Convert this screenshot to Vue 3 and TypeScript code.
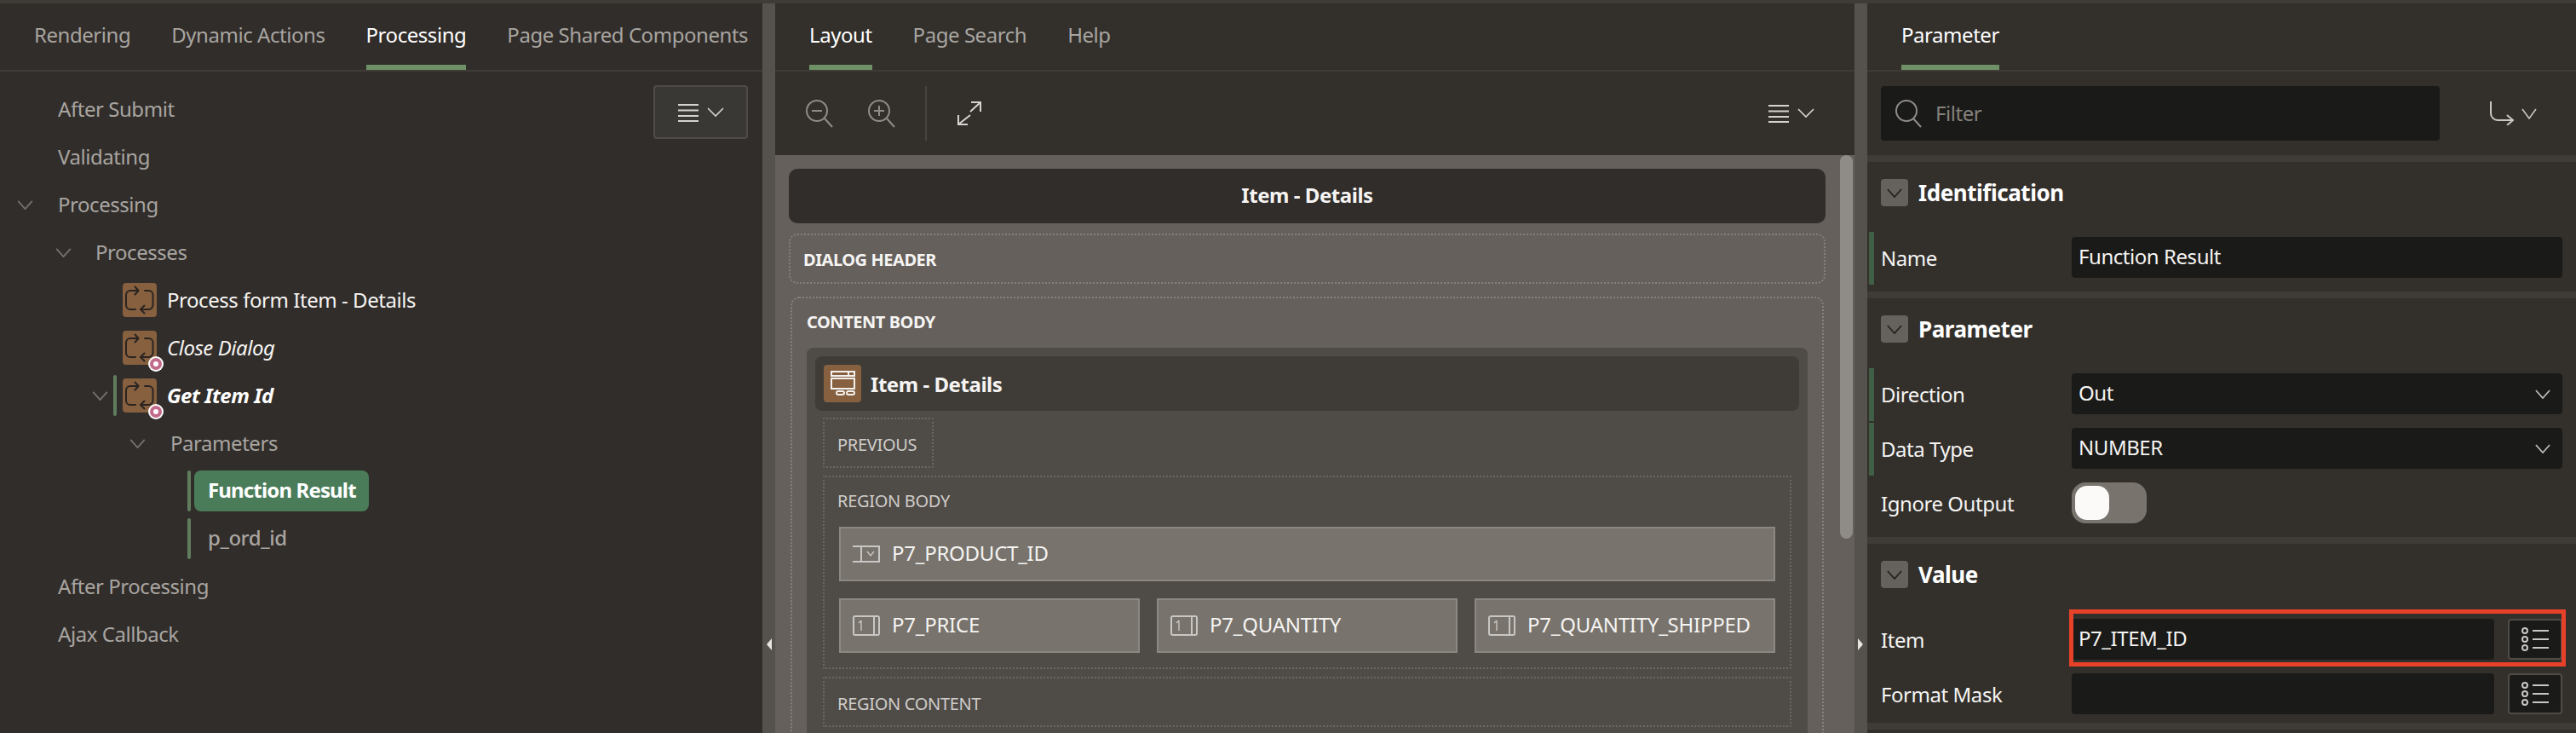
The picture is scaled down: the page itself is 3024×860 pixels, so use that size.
<script setup lang="ts">
interface TreeRow {
  label: string
  indent: number
  chevron?: boolean
  kind?: 'process' | 'param'
  italic?: boolean
  bold?: boolean
  badge?: boolean
  marker?: boolean
  selected?: boolean
}

const leftTabs = ['Rendering', 'Dynamic Actions', 'Processing', 'Page Shared Components']
const centerTabs = ['Layout', 'Page Search', 'Help']

const tree: TreeRow[] = [
  { label: 'After Submit', indent: 0 },
  { label: 'Validating', indent: 0 },
  { label: 'Processing', indent: 0, chevron: true },
  { label: 'Processes', indent: 1, chevron: true },
  { label: 'Process form Item - Details', indent: 2, kind: 'process' },
  { label: 'Close Dialog', indent: 2, kind: 'process', italic: true, badge: true },
  { label: 'Get Item Id', indent: 2, kind: 'process', italic: true, bold: true, badge: true, chevron: true, marker: true },
  { label: 'Parameters', indent: 3, chevron: true },
  { label: 'Function Result', indent: 4, kind: 'param', selected: true, marker: true },
  { label: 'p_ord_id', indent: 4, kind: 'param', marker: true },
  { label: 'After Processing', indent: 0 },
  { label: 'Ajax Callback', indent: 0 },
]

const numberItems = ['P7_PRICE', 'P7_QUANTITY', 'P7_QUANTITY_SHIPPED']
</script>

<template>
  <div class="app">
    <svg class="sprite" aria-hidden="true">
      <symbol id="chev" viewBox="0 0 20 12">
        <path d="M1 1l9 10 9-10" fill="none" stroke="currentColor" stroke-width="2" />
      </symbol>
      <symbol id="menu" viewBox="0 0 54 22">
        <path d="M0 2h24M0 8.500h24M0 15h24M0 21h24" fill="none" stroke="currentColor" stroke-width="2" />
        <path d="M35 6l9 9 9-9" fill="none" stroke="currentColor" stroke-width="1.6" />
      </symbol>
      <symbol id="loop" viewBox="0 0 40 40">
        <g fill="none" stroke="#2a2421" stroke-width="2" stroke-linecap="round" stroke-linejoin="round">
          <path d="M18 9H9a5 5 0 0 0-5 5v12a5 5 0 0 0 5 5h6" />
          <path d="M14.500 4.500l4 4.500-4 4.500" />
          <path d="M26 9h4.500a5 5 0 0 1 5 5v12a5 5 0 0 1-5 5H21" />
          <path d="M25.500 26.500l-4.500 4.500 4.500 4.500" />
        </g>
      </symbol>
      <symbol id="list" viewBox="0 0 32 28">
        <g fill="none" stroke="#c9c7c4" stroke-width="2">
          <circle cx="4" cy="4" r="3" />
          <circle cx="4" cy="14" r="3" />
          <circle cx="4" cy="24" r="3" />
          <path d="M13 4h19M13 14h19M13 24h19" />
        </g>
      </symbol>
      <symbol id="num" viewBox="0 0 32 24">
        <g fill="none" stroke="#c9c7c4">
          <rect x="1" y="1" width="30" height="22" rx="2" stroke-width="2" />
          <path d="M10 6l-3 3M10 6v12" stroke-width="1.4" />
          <path d="M25 2v20" stroke-width="2" />
        </g>
      </symbol>
    </svg>

    <div class="top-strip"></div>
    <div class="workspace">
      <!-- page tree -->
      <section class="panel panel--left">
        <nav class="tabs tabs--left">
          <span v-for="t in leftTabs" :key="t" class="tab" :class="{ 'tab--on': t === 'Processing' }">{{ t }}</span>
        </nav>
        <div class="tree-wrap">
          <ul class="tree">
            <li v-for="row in tree" :key="row.label" class="row" :class="'row--i' + row.indent">
              <svg v-if="row.chevron" class="row__chev"><use href="#chev" /></svg>
              <span v-if="row.marker" class="row__marker"></span>
              <span v-if="row.kind === 'process'" class="proc">
                <svg class="proc__icon"><use href="#loop" /></svg>
                <span v-if="row.badge" class="proc__badge"></span>
              </span>
              <span
                class="row__label"
                :class="{
                  'row__label--proc': row.kind === 'process',
                  'row__label--i': row.italic,
                  'row__label--b': row.bold,
                  'row__label--param': row.kind === 'param',
                  'row__label--sel': row.selected,
                }"
              >{{ row.label }}</span>
            </li>
          </ul>
          <button class="menu-btn"><svg class="menu-ic"><use href="#menu" /></svg></button>
        </div>
      </section>

      <div class="split"><span class="split__arrow split__arrow--l"></span></div>

      <!-- layout -->
      <section class="panel panel--center">
        <nav class="tabs tabs--center">
          <span v-for="t in centerTabs" :key="t" class="tab" :class="{ 'tab--on': t === 'Layout' }">{{ t }}</span>
        </nav>
        <div class="toolbar">
          <svg class="zoom-ic" viewBox="0 0 34 34">
            <g fill="none" stroke="#8f8b87" stroke-width="2"><circle cx="14" cy="14" r="12" /><path d="M23 23l9 10M8 14h12" /></g>
          </svg>
          <svg class="zoom-ic zoom-ic--plus" viewBox="0 0 34 34">
            <g fill="none" stroke="#8f8b87" stroke-width="2"><circle cx="14" cy="14" r="12" /><path d="M23 23l9 10M8 14h12M14 8v12" /></g>
          </svg>
          <span class="toolbar__div"></span>
          <svg class="expand-ic" viewBox="0 0 30 30">
            <path d="M16 2h11v11M27 2L15 13M12 28H1V17M1 28l14-11" fill="none" stroke="#d5d3d0" stroke-width="2" />
          </svg>
          <svg class="menu-ic menu-ic--end"><use href="#menu" /></svg>
        </div>
        <div class="stage">
          <div class="canvas">
            <div class="canvas__title">Item - Details</div>
            <div class="zone zone--dialog"><span class="zone__label">DIALOG HEADER</span></div>
            <div class="zone zone--content">
              <span class="zone__label zone__label--content">CONTENT BODY</span>
              <div class="region">
                <div class="region__head">
                  <span class="region__icon">
                    <svg viewBox="0 0 44 44" width="44" height="44">
                      <g fill="none" stroke="#f4f2ef" stroke-width="2">
                        <rect x="9" y="8" width="27" height="5" />
                        <path d="M29 8v5" />
                        <rect x="9" y="16" width="27" height="12" />
                        <rect x="15" y="31" width="9" height="4" rx="2" />
                        <rect x="27" y="31" width="9" height="4" rx="2" />
                      </g>
                    </svg>
                  </span>
                  <span class="region__name">Item - Details</span>
                </div>
                <div class="region__body">
                  <div class="slot slot--prev"><span class="slot__label">PREVIOUS</span></div>
                  <div class="slot slot--body">
                    <span class="slot__label slot__label--body">REGION BODY</span>
                    <div class="item">
                      <svg class="item__icon item__icon--select" viewBox="0 0 32 20">
                        <g fill="none" stroke="#c9c7c4" stroke-width="2">
                          <path d="M0 1h31v18H0M10 1v18" />
                          <path d="M17 7l4 5 4-5" stroke-width="1.4" />
                        </g>
                      </svg>
                      <span>P7_PRODUCT_ID</span>
                    </div>
                    <div class="item-row">
                      <div v-for="name in numberItems" :key="name" class="item">
                        <svg class="item__icon"><use href="#num" /></svg>
                        <span>{{ name }}</span>
                      </div>
                    </div>
                  </div>
                  <div class="slot slot--content"><span class="slot__label">REGION CONTENT</span></div>
                </div>
              </div>
            </div>
          </div>
          <div class="scroll"><span class="scroll__thumb"></span></div>
        </div>
      </section>

      <div class="split"><span class="split__arrow split__arrow--r"></span></div>

      <!-- property editor -->
      <section class="panel panel--right">
        <nav class="tabs tabs--right">
          <span class="tab tab--on">Parameter</span>
        </nav>
        <div class="filter-bar">
          <div class="filter">
            <svg class="filter__ic" viewBox="0 0 32 34">
              <g fill="none" stroke="#8f8b87" stroke-width="2"><circle cx="14" cy="14" r="12" /><path d="M22 23l9 10" /></g>
            </svg>
            <span class="filter__text">Filter</span>
          </div>
          <svg class="goto-ic" viewBox="0 0 56 28">
            <path d="M2 0v14a8 8 0 0 0 8 8h17M21 16l7 6-7 6" fill="none" stroke="#c9c7c4" stroke-width="2" />
            <path d="M39 9l8 11 8-11" fill="none" stroke="#c9c7c4" stroke-width="1.6" />
          </svg>
        </div>

        <div class="group">
          <h3 class="group__head"><span class="toggle"><svg class="toggle__ic"><use href="#chev" /></svg></span>Identification</h3>
          <div class="field field--mark">
            <label>Name</label>
            <div class="input">Function Result</div>
          </div>
        </div>

        <div class="group">
          <h3 class="group__head"><span class="toggle"><svg class="toggle__ic"><use href="#chev" /></svg></span>Parameter</h3>
          <div class="fields fields--param">
            <div class="field field--mark">
              <label>Direction</label>
              <div class="input input--select">Out<svg class="select-ic"><use href="#chev" /></svg></div>
            </div>
            <div class="field field--mark">
              <label>Data Type</label>
              <div class="input input--select">NUMBER<svg class="select-ic"><use href="#chev" /></svg></div>
            </div>
            <div class="field">
              <label>Ignore Output</label>
              <div class="switch"><span class="switch__thumb"></span></div>
            </div>
          </div>
        </div>

        <div class="group group--last">
          <h3 class="group__head"><span class="toggle"><svg class="toggle__ic"><use href="#chev" /></svg></span>Value</h3>
          <div class="fields fields--value">
            <div class="field field--highlight">
              <label>Item</label>
              <div class="input input--short">P7_ITEM_ID</div>
              <button class="pick"><svg class="pick__ic"><use href="#list" /></svg></button>
              <span class="redbox"></span>
            </div>
            <div class="field">
              <label>Format Mask</label>
              <div class="input input--short"></div>
              <button class="pick"><svg class="pick__ic"><use href="#list" /></svg></button>
            </div>
          </div>
        </div>
      </section>
    </div>
  </div>
</template>

<style>
html,
body {
  margin: 0;
  background: #312d2a;
}
</style>

<style scoped>
.app {
  width: 3024px;
  height: 860px;
  overflow: hidden;
  display: flex;
  flex-direction: column;
  background: #312d2a;
  color: #f5f4f2;
  font-family: 'Noto Sans', sans-serif;
  font-size: 24px;
  letter-spacing: -0.45px;
}

.sprite {
  position: absolute;
  width: 0;
  height: 0;
}

.top-strip {
  height: 4px;
  background: #3f3c37;
  flex: none;
}

.workspace {
  flex: 1;
  display: flex;
  min-height: 0;
}

.panel {
  min-width: 0;
  display: flex;
  flex-direction: column;
}

.panel--left { width: 895px; }
.panel--center { width: 1267px; background: #33302c; }
.panel--right { width: 832px; background: #33302c; }

.split {
  width: 15px;
  flex: none;
  background: #55514c;
  position: relative;
}

.split__arrow {
  position: absolute;
  top: 745px;
  width: 0;
  height: 0;
  border-top: 7px solid transparent;
  border-bottom: 7px solid transparent;
}

.split__arrow--l {
  left: 5px;
  border-right: 6px solid #e8e6e3;
}

.split__arrow--r {
  left: 4px;
  border-left: 6px solid #e8e6e3;
}

.tabs {
  height: 78px;
  flex: none;
  display: flex;
  gap: 48px;
  border-bottom: 2px solid #3f3c37;
  box-sizing: content-box;
  padding-left: 40px;
}

.tab {
  height: 78px;
  box-sizing: border-box;
  padding-top: 20px;
  line-height: 34px;
  color: #a8a5a1;
  white-space: nowrap;
}

.tab--on {
  color: #fff;
  border-bottom: 6px solid #6f9167;
}

/* tree */
.tree-wrap {
  flex: 1;
  position: relative;
  padding-top: 16px;
}

.tree {
  list-style: none;
  margin: 0;
  padding: 0;
}

.row {
  height: 56px;
  display: flex;
  align-items: center;
  position: relative;
  color: #a8a5a1;
}

.row__label {
  position: relative;
  top: -1px;
}

.row--i0 { padding-left: 68px; }
.row--i1 { padding-left: 112px; }
.row--i2 { padding-left: 144px; }
.row--i3 { padding-left: 200px; }
.row--i4 { padding-left: 228px; }

.row__chev {
  position: absolute;
  width: 19px;
  height: 11px;
  color: #75716d;
}

.row--i0 .row__chev { left: 20px; }
.row--i1 .row__chev { left: 65px; }
.row--i2 .row__chev { left: 108px; }
.row--i3 .row__chev { left: 152px; }

.row__marker {
  position: absolute;
  top: 4px;
  bottom: 4px;
  width: 4px;
  border-radius: 2px;
  background: #5f7d5e;
}

.row--i2 .row__marker { left: 133px; }
.row--i4 .row__marker { left: 220px; }

.proc {
  position: relative;
  width: 40px;
  height: 40px;
  background: #86603f;
  border-radius: 4px;
  margin-right: 12px;
  flex: none;
}

.proc__icon {
  width: 40px;
  height: 40px;
  display: block;
}

.proc__badge {
  position: absolute;
  right: -6px;
  bottom: -6px;
  width: 6px;
  height: 6px;
  border: 4px solid #c26a8a;
  border-radius: 50%;
  background: #fff;
  box-shadow: 0 0 0 2px #fff;
  box-sizing: content-box;
}

.row__label--proc { color: #f5f4f2; }
.row__label--i { font-style: italic; }
.row__label--b { font-weight: 700; color: #fff; }
.row__label--param {
  top: 0;
  padding: 0 16px;
  height: 48px;
  line-height: 46px;
  border-radius: 8px;
  font-weight: 500;
}
.row__label--sel {
  width: 205px;
  box-sizing: border-box;
  background: #4a7c59;
  color: #fff;
  font-weight: 700;
  letter-spacing: -0.85px;
  white-space: nowrap;
}

.menu-btn {
  position: absolute;
  top: 16px;
  left: 767px;
  width: 111px;
  height: 63px;
  padding: 0;
  background: #3a3834;
  border: 2px solid #4f4b47;
  border-radius: 4px;
  display: flex;
  align-items: center;
  justify-content: center;
  color: #d5d3d0;
}

.menu-ic {
  width: 54px;
  height: 22px;
  color: #d5d3d0;
}

/* toolbar */
.toolbar {
  height: 98px;
  flex: none;
  display: flex;
  align-items: center;
  padding-left: 35px;
}

.zoom-ic {
  width: 34px;
  height: 34px;
}

.zoom-ic--plus { margin-left: 39px; }

.toolbar__div {
  width: 2px;
  height: 64px;
  background: #47433f;
  margin-left: 34px;
}

.expand-ic {
  width: 30px;
  height: 30px;
  margin-left: 36px;
}

.menu-ic--end { margin-left: auto; margin-right: 47px; }

/* canvas */
.stage {
  flex: 1;
  display: flex;
  min-height: 0;
}

.canvas {
  flex: 1;
  min-width: 0;
  background: #65605b;
  padding: 16px 17px 0 16px;
  overflow: hidden;
}

.canvas__title {
  height: 64px;
  line-height: 62px;
  background: #312d2a;
  border-radius: 10px;
  text-align: center;
  font-weight: 700;
}

.zone {
  border: 2px dotted #85817c;
  border-radius: 10px;
}

.zone__label {
  font-size: 20px;
  font-weight: 700;
  color: #f5f4f2;
}

.zone--dialog {
  height: 59px;
  box-sizing: border-box;
  margin-top: 12px;
  padding-left: 15px;
  line-height: 53px;
}

.zone--content {
  margin: 15px 2px 0;
  padding: 0 17px;
  height: 520px;
  box-sizing: border-box;
}

.zone__label--content {
  display: block;
  height: 58px;
  line-height: 56px;
}

.region {
  background: #4f4b47;
  padding: 10px;
  height: 460px;
  border-radius: 8px 8px 0 0;
}

.region__head {
  height: 64px;
  box-sizing: border-box;
  background: #3f3c37;
  border-radius: 8px;
  padding: 0 10px;
  display: flex;
  align-items: center;
  gap: 11px;
}

.region__icon {
  width: 44px;
  height: 44px;
  background: #86603f;
  border-radius: 4px;
  flex: none;
}

.region__name { font-weight: 700; }

.region__body {
  padding: 8px 9px 0;
}

.slot {
  border: 2px dotted #6b6762;
  box-sizing: border-box;
  border-radius: 2px;
  padding: 0 15px;
}

.slot__label {
  font-size: 20px;
  letter-spacing: -0.3px;
  color: #cfcdca;
}

.slot--prev {
  width: 130px;
  height: 59px;
  line-height: 55px;
}

.slot--body {
  margin-top: 9px;
  padding: 0 17px 17px;
}

.slot__label--body {
  display: block;
  height: 58px;
  line-height: 56px;
  margin-left: -2px;
}

.slot--content {
  margin-top: 9px;
  height: 59px;
  line-height: 55px;
}

.item {
  height: 64px;
  box-sizing: border-box;
  background: #78736d;
  border: 2px solid #8b8782;
  display: flex;
  align-items: center;
  gap: 14px;
  padding-left: 14px;
  white-space: nowrap;
  min-width: 0;
  letter-spacing: -0.25px;
  line-height: 30px;
}

.item span {
  position: relative;
  top: -1px;
}

.item__icon {
  width: 32px;
  height: 24px;
  flex: none;
}

.item__icon--select { height: 20px; }

.item-row {
  display: grid;
  grid-template-columns: repeat(3, 1fr);
  gap: 20px;
  margin-top: 20px;
}

.scroll {
  width: 17px;
  flex: none;
  background: #65605b;
}

.scroll__thumb {
  display: block;
  width: 15px;
  height: 450px;
  background: #8f8b87;
  border-radius: 8px;
}

/* property editor */
.filter-bar {
  height: 98px;
  flex: none;
  display: flex;
  align-items: center;
  padding-left: 16px;
}

.filter {
  width: 656px;
  height: 64px;
  background: #1a1a18;
  border-radius: 4px;
  display: flex;
  align-items: center;
  gap: 16px;
  padding-left: 16px;
  box-sizing: border-box;
  color: #85817c;
}

.filter__text {
  position: relative;
  top: -1px;
}

.filter__ic {
  width: 32px;
  height: 34px;
}

.goto-ic {
  width: 56px;
  height: 28px;
  margin-left: 58px;
}

.group {
  border-top: 8px solid #3f3c37;
}

.group--last {
  border-bottom: 8px solid #3f3c37;
}

.group__head {
  margin: 0;
  height: 82px;
  box-sizing: border-box;
  padding: 20px 0 0 16px;
  display: flex;
  align-items: flex-start;
  gap: 12px;
  font-size: 26px;
  line-height: 32px;
  font-weight: 700;
  color: #fff;
}

.toggle {
  width: 32px;
  height: 32px;
  background: #65615c;
  border-radius: 4px;
  display: flex;
  align-items: center;
  justify-content: center;
  flex: none;
}

.toggle__ic {
  width: 18px;
  height: 11px;
  color: #25211e;
}

.field {
  height: 62px;
  box-sizing: border-box;
  padding-bottom: 2px;
  display: flex;
  align-items: center;
  position: relative;
  padding-left: 16px;
  margin-bottom: 2px;
}

.field--mark::before {
  content: '';
  position: absolute;
  left: 2px;
  top: 0;
  bottom: 0;
  width: 6px;
  background: #415f47;
}

.field label {
  width: 224px;
  flex: none;
}

.group > .field {
  margin-bottom: 8px;
}

.input {
  width: 576px;
  height: 48px;
  line-height: 46px;
  box-sizing: border-box;
  background: #1a1a18;
  border-radius: 4px;
  padding-left: 8px;
  position: relative;
  white-space: nowrap;
}

.input--short { width: 496px; }

.select-ic {
  position: absolute;
  right: 14px;
  top: 19px;
  width: 18px;
  height: 11px;
  color: #bdbab7;
}

.switch {
  width: 88px;
  height: 48px;
  background: #78736d;
  border-radius: 16px;
  padding: 4px;
  box-sizing: border-box;
}

.switch__thumb {
  display: block;
  width: 40px;
  height: 40px;
  background: #fbfaf8;
  border-radius: 14px;
}

.fields--param {
  margin-bottom: 8px;
}

.pick {
  width: 64px;
  height: 48px;
  margin-left: 16px;
  padding: 0;
  background: #1a1a18;
  border: 2px solid #4f4b47;
  border-radius: 4px;
  display: flex;
  align-items: center;
  justify-content: center;
}

.pick__ic {
  width: 32px;
  height: 28px;
}

.redbox {
  position: absolute;
  left: 237px;
  right: 12px;
  top: -5px;
  bottom: 0;
  border: 5px solid #e8412a;
  pointer-events: none;
}
</style>
